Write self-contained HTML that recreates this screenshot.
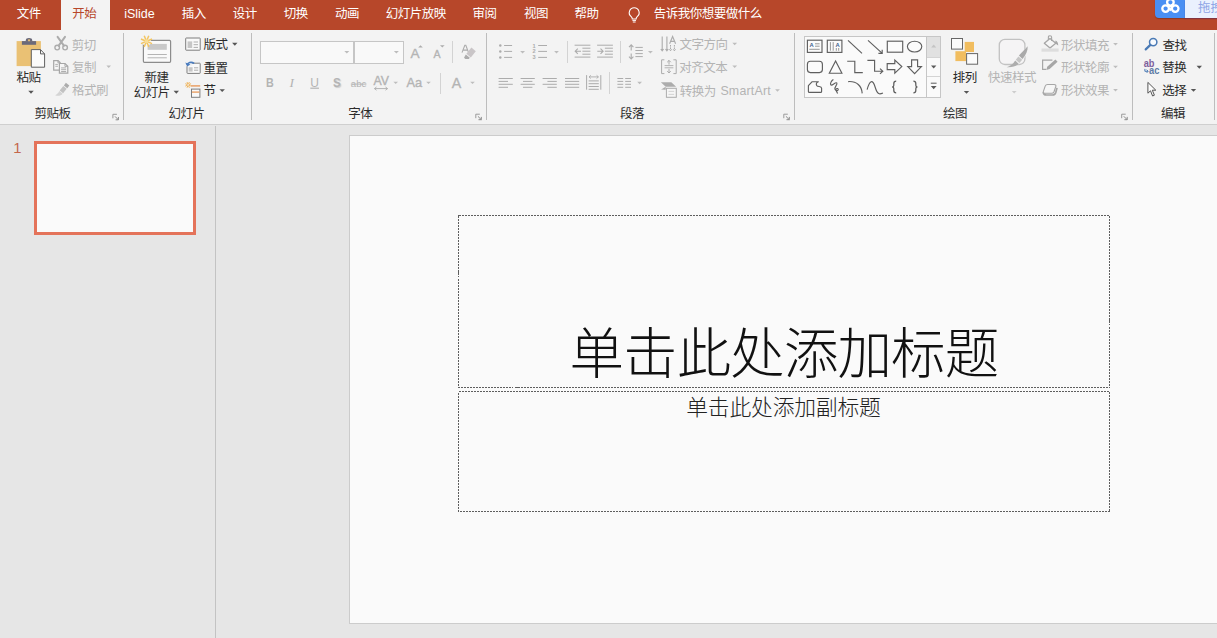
<!DOCTYPE html>
<html lang="zh-CN">
<head>
<meta charset="utf-8">
<title>PowerPoint</title>
<style>
html,body{margin:0;padding:0}
body{width:1217px;height:638px;overflow:hidden;position:relative;background:#e6e6e6;font-family:"Liberation Sans",sans-serif;font-size:12px;color:#2b2b2b}
div,span,svg{position:absolute;box-sizing:border-box}
.lbl{left:0;top:0}
.sr{width:1px;height:1px;overflow:hidden;clip-path:inset(50%);white-space:nowrap;color:transparent;font-size:1px}
svg{overflow:visible}
.tx text{font-family:"Liberation Sans","Noto Sans CJK SC",sans-serif;font-size:12.5px;letter-spacing:-0.5px;white-space:pre}
#tabbar{left:0;top:0;width:1217px;height:30px;background:#b7472a}
#tab-active{left:61px;top:0;width:49px;height:31px;background:#f3f3f3}
#ribbon{left:0;top:30px;width:1217px;height:94px;background:#f3f3f3}
#ribbon-edge{left:0;top:124px;width:1217px;height:1px;background:#cfcfcf}
.gsep{width:1px;background:#bdbdbd;top:33px;height:87px}
.ssep{width:1px;background:#d3d3d3}
.lat{white-space:nowrap;line-height:1;left:0;top:0}
.dis{color:#b3b3b3}
#work{left:0;top:125px;width:1217px;height:513px;background:#e6e6e6}
#panesep{left:215px;top:126px;width:1px;height:512px;background:#c3c3c3}
#thumb{left:34px;top:141px;width:162px;height:94px;border:3px solid #e4735a;background:#fafafa}
#slide{left:349px;top:135px;width:880px;height:489px;background:#fafafa;border:1px solid #cccccc}
#combo-font{left:260px;top:41px;width:94px;height:23px;border:1px solid #c6c6c6;background:#f9f9f9}
#combo-size{left:354px;top:41px;width:50px;height:23px;border:1px solid #c6c6c6;background:#f9f9f9}
#gallery{left:804px;top:36px;width:137px;height:62px;border:1px solid #c6c6c6;background:#fafafa}
#gal-scroll{left:926px;top:36px;width:15px;height:62px;border:1px solid #c6c6c6;background:#fafafa}
#gal-up{left:927px;top:37px;width:13px;height:21px;background:#e1e1e1}
#gal-l1{left:927px;top:57px;width:13px;height:1px;background:#d4d4d4}
#gal-l2{left:927px;top:76px;width:13px;height:1px;background:#d4d4d4}
#baidu{left:1155px;top:0;width:30px;height:18px;background:#4a8ff3;border-bottom-left-radius:4px;box-shadow:0 1px 1px rgba(70,30,20,.35)}
#baidu-bar{left:1185px;top:0;width:32px;height:18px;background:#eaf1fe;box-shadow:0 1px 1px rgba(70,30,90,.45)}
</style>
</head>
<body>
<div id="tabbar"></div><div id="tab-active"></div><div id="tabs">
<span class="lbl"><svg class="tx" style="left:16px;top:6px" width="26" height="15" fill="#ffffff" role="img" aria-label="文件"><text x="0.66" y="12.46">文件</text></svg><span class="sr">文件</span></span>
<span class="lbl"><svg class="tx" style="left:71px;top:6px" width="27" height="15" fill="#b7472a" role="img" aria-label="开始"><text x="1.29" y="12.38">开始</text></svg><span class="sr">开始</span></span>
<svg class="lat" style="left:124px;top:5px" width="63" height="19"><text x="0" y="0" font-size="12.5" fill="#ffffff" style="" transform="translate(0.2 12.9) scale(1 1)">iSlide</text></svg>
<span class="lbl"><svg class="tx" style="left:181px;top:6px" width="26" height="15" fill="#ffffff" role="img" aria-label="插入"><text x="0.64" y="12.39">插入</text></svg><span class="sr">插入</span></span>
<span class="lbl"><svg class="tx" style="left:232px;top:6px" width="26" height="15" fill="#ffffff" role="img" aria-label="设计"><text x="0.73" y="12.37">设计</text></svg><span class="sr">设计</span></span>
<span class="lbl"><svg class="tx" style="left:283px;top:6px" width="27" height="15" fill="#ffffff" role="img" aria-label="切换"><text x="0.85" y="12.39">切换</text></svg><span class="sr">切换</span></span>
<span class="lbl"><svg class="tx" style="left:334px;top:6px" width="26" height="15" fill="#ffffff" role="img" aria-label="动画"><text x="1.01" y="12.3">动画</text></svg><span class="sr">动画</span></span>
<span class="lbl"><svg class="tx" style="left:385px;top:6px" width="62" height="15" fill="#ffffff" role="img" aria-label="幻灯片放映"><text x="0.81" y="12.39">幻灯片放映</text></svg><span class="sr">幻灯片放映</span></span>
<span class="lbl"><svg class="tx" style="left:472px;top:6px" width="25" height="15" fill="#ffffff" role="img" aria-label="审阅"><text x="0.47" y="12.46">审阅</text></svg><span class="sr">审阅</span></span>
<span class="lbl"><svg class="tx" style="left:523px;top:6px" width="26" height="15" fill="#ffffff" role="img" aria-label="视图"><text x="0.93" y="12.38">视图</text></svg><span class="sr">视图</span></span>
<span class="lbl"><svg class="tx" style="left:574px;top:6px" width="26" height="15" fill="#ffffff" role="img" aria-label="帮助"><text x="0.58" y="12.39">帮助</text></svg><span class="sr">帮助</span></span>
<svg class="ic" style="left:628px;top:7px" width="13" height="16" fill="none"><g transform="translate(0.2 0)"><path d="M6 .8a4.9 4.9 0 0 0-3 8.8c.8.7 1.1 1.5 1.1 2.4h3.8c0-.9.3-1.7 1.1-2.4A4.9 4.9 0 0 0 6 .8z" stroke="#fff" stroke-width="1.1"/><path d="M4.2 13.4h3.6M4.6 15h2.8" stroke="#fff" stroke-width="1"/></g></svg>
<span class="lbl"><svg class="tx" style="left:653px;top:6px" width="110" height="15" fill="#ffffff" role="img" aria-label="告诉我你想要做什么"><text x="0.71" y="12.36">告诉我你想要做什么</text></svg><span class="sr">告诉我你想要做什么</span></span>
</div>
<div id="baidu"></div><div id="baidu-bar"></div>
<svg class="ic" style="left:1160px;top:0px" width="21" height="14" fill="none"><circle cx="10.4" cy="2.3" r="3.3" stroke="#fff" stroke-width="2.3"/><circle cx="5.6" cy="8.6" r="3.3" stroke="#fff" stroke-width="2.3"/><circle cx="15.2" cy="8.6" r="3.3" stroke="#fff" stroke-width="2.3"/><path d="M8.2 6.2L12.6 6.2L9.6 10.6" stroke="#fff" stroke-width="2" /></svg>
<span class="lbl"><svg class="tx" style="left:1197px;top:0px" width="27" height="14" fill="#8ea5e6" role="img" aria-label="拖拽"><text x="0.89" y="11.76" style="letter-spacing:0">拖拽</text></svg><span class="sr">拖拽</span></span>
<div id="ribbon"></div><div id="ribbon-edge"></div>
<div class="gsep" style="left:123px"></div>
<div class="gsep" style="left:251px"></div>
<div class="gsep" style="left:486px"></div>
<div class="gsep" style="left:794px"></div>
<div class="gsep" style="left:1132px"></div>
<div class="gsep" style="left:1214px"></div>
<div id="grp-clipboard">
<svg class="ic" style="left:16px;top:37px" width="30" height="31" fill="none"><rect x=".6" y="4.1" width="24.3" height="25" fill="#eac174"/><path d="M5.9 4.1h14.2v3.7H5.9z" fill="#6b6a7a"/><path d="M9.8 4.6V3.2a3.2 2.2 0 0 1 6.4 0v1.4z" fill="#6b6a7a"/><circle cx="13" cy="3.3" r="1.1" fill="#eac174"/><path d="M15.3 12.6h9.2l4.1 4.3v13.3H15.3z" fill="#fbfbfb" stroke="#5f5f5f" stroke-width="1"/><path d="M24.5 12.6v4.3h4.1" stroke="#5f5f5f" stroke-width="1"/></svg>
<span class="lbl"><svg class="tx" style="left:15px;top:70px" width="27" height="15" fill="#2b2b2b" role="img" aria-label="粘贴"><text x="1.57" y="12.44">粘贴</text></svg><span class="sr">粘贴</span></span>
<svg class="ic" style="left:28px;top:90px" width="7" height="4"><path transform="translate(0.3 0.75)" d="M0 0H5.4L2.7 2.9Z" fill="#555"/></svg>
<svg class="ic" style="left:53px;top:36px" width="16" height="15" fill="none"><path d="M4.6 .9L10.9 9.6M12 .9L5.7 9.6" stroke="#acacac" stroke-width="2" stroke-linecap="round"/><circle cx="4.2" cy="11.6" r="2.3" stroke="#acacac" stroke-width="1.4"/><circle cx="12.1" cy="11.6" r="2.3" stroke="#acacac" stroke-width="1.4"/></svg>
<span class="lbl"><svg class="tx" style="left:71px;top:38px" width="26" height="14" fill="#b4b4b4" role="img" aria-label="剪切"><text x="0.71" y="11.71">剪切</text></svg><span class="sr">剪切</span></span>
<svg class="ic" style="left:52px;top:59px" width="18" height="16" fill="none"><g transform="translate(0.5 0.5)"><path d="M1.2 1.1h4.4l2 2v7.6H1.2z" stroke="#a6a6a6" stroke-width="1.2" fill="#f6f6f6"/><path d="M5.4 1.1v2.2h2.2" stroke="#a6a6a6" stroke-width=".9"/><path d="M6.9 4h5.6l2.8 2.8v6.8H6.9z" stroke="#a6a6a6" stroke-width="1.2" fill="#f6f6f6"/><path d="M12.4 4v2.9h2.9" stroke="#a6a6a6" stroke-width=".9"/><path d="M8.6 8.4h5M8.6 10.2h5M8.6 12h5M2.8 4.9h2.6M2.8 6.8h2.6" stroke="#a6a6a6" stroke-width=".9"/></g></svg>
<span class="lbl"><svg class="tx" style="left:71px;top:60px" width="26" height="15" fill="#b4b4b4" role="img" aria-label="复制"><text x="0.89" y="12.1">复制</text></svg><span class="sr">复制</span></span>
<svg class="ic" style="left:106px;top:65px" width="6" height="4"><path transform="translate(0.4 0.6)" d="M0 0H4.6L2.3 2.4Z" fill="#bdbdbd"/></svg>
<svg class="ic" style="left:54px;top:82px" width="17" height="15" fill="none"><g transform="translate(0.5 0.2)"><path d="M11.4 .6l3.4 2.8-2 2.6-3.4-2.8z" fill="#acacac"/><path d="M8.8 3.8l3.4 2.8-3.6 4.4-3.4-2.8z" fill="#c2c2c2"/><path d="M4.8 8.8l3.4 2.8c-2 2.2-4.8 2.6-7.6 1.4c2-.8 3.2-2.2 4.2-4.2z" fill="#d4d4d4"/></g></svg>
<span class="lbl"><svg class="tx" style="left:71px;top:83px" width="38" height="14" fill="#b4b4b4" role="img" aria-label="格式刷"><text x="1.05" y="11.75">格式刷</text></svg><span class="sr">格式刷</span></span>
<span class="lbl"><svg class="tx" style="left:34px;top:106px" width="38" height="15" fill="#2b2b2b" role="img" aria-label="剪贴板"><text x="0.58" y="12.31">剪贴板</text></svg><span class="sr">剪贴板</span></span>
<svg class="ic" style="left:112px;top:113px" width="8" height="8" fill="none"><g transform="translate(0.4 0.8)"><path d="M.5 4.5V.5H4.5" stroke="#9a9a9a" stroke-width="1"/><path d="M2.6 2.6L6 6M6 3.2V6H3.2" stroke="#8a8a8a" stroke-width="1"/></g></svg>
</div>
<div id="grp-slides">
<svg class="ic" style="left:140px;top:35px" width="32" height="29" fill="none"><rect x="3.4" y="5.4" width="27.2" height="21.9" rx="1" fill="#f9f9f9" stroke="#8c8c8c" stroke-width="1.2"/><rect x="7.6" y="8.9" width="19.2" height="5.9" fill="#c9c9c9"/><path d="M7.6 19.5h19.2M7.6 22.8h19.2" stroke="#b4b4b4" stroke-width="1"/><circle cx="6.5" cy="6.3" r="4.6" fill="#f3f3f3"/><path d="M7.98 6.91L12.04 8.6M7.11 7.78L8.8 11.84M5.89 7.78L4.2 11.84M5.02 6.91L0.96 8.6M5.02 5.69L0.96 4M5.89 4.82L4.2 0.76M7.11 4.82L8.8 0.76M7.98 5.69L12.04 4" stroke="#f3c561" stroke-width="1.5"/><circle cx="6.5" cy="6.3" r="2" fill="#f8dc96"/></svg>
<span class="lbl"><svg class="tx" style="left:144px;top:70px" width="26" height="15" fill="#2b2b2b" role="img" aria-label="新建"><text x="0.59" y="12.08">新建</text></svg><span class="sr">新建</span></span>
<span class="lbl"><svg class="tx" style="left:133px;top:85px" width="37" height="15" fill="#2b2b2b" role="img" aria-label="幻灯片"><text x="0.67" y="12.12">幻灯片</text></svg><span class="sr">幻灯片</span></span>
<svg class="ic" style="left:173px;top:90px" width="7" height="4"><path transform="translate(0.6 0.75)" d="M0 0H5.4L2.7 2.9Z" fill="#555"/></svg>
<svg class="ic" style="left:185px;top:37px" width="16" height="14" fill="none"><rect x=".7" y="1" width="14.5" height="12.2" rx=".5" fill="#f9f9f9" stroke="#7d7d7d" stroke-width="1"/><rect x="2.6" y="4.4" width="4.6" height="6.6" fill="#c6c6c6"/><path d="M8.6 5h4.4M8.6 7.7h4.4M8.6 10.4h4.4" stroke="#a4a4a4" stroke-width=".9"/></svg>
<span class="lbl"><svg class="tx" style="left:202px;top:37px" width="27" height="15" fill="#2b2b2b" role="img" aria-label="版式"><text x="1.56" y="12.12">版式</text></svg><span class="sr">版式</span></span>
<svg class="ic" style="left:232px;top:42px" width="7" height="4"><path transform="translate(0.1 0.75)" d="M0 0H5.4L2.7 2.9Z" fill="#555"/></svg>
<svg class="ic" style="left:185px;top:60px" width="16" height="14" fill="none"><rect x="2" y="3.2" width="13.2" height="10.2" rx=".5" fill="#f9f9f9" stroke="#7d7d7d" stroke-width="1"/><rect x="3.6" y="7.2" width="4" height="4.4" fill="#c6c6c6"/><path d="M9 7.8h4.2M9 10.2h4.2" stroke="#a4a4a4" stroke-width=".9"/><rect x="0" y="0" width="7.2" height="6.2" fill="#f3f3f3"/><path d="M2.2 5.2C2.6 2.6 6 1.4 9.2 3.4" stroke="#4a7cbe" stroke-width="1.6"/><path d="M.3 2.6L2.2 6.6L5.4 4.4z" fill="#4a7cbe"/></svg>
<span class="lbl"><svg class="tx" style="left:203px;top:60px" width="26" height="15" fill="#2b2b2b" role="img" aria-label="重置"><text x="0.56" y="12.51">重置</text></svg><span class="sr">重置</span></span>
<svg class="ic" style="left:185px;top:81px" width="16" height="18" fill="none"><g transform="translate(0 0.5)"><path d="M3.94 3.71L6.06 4.59M3.51 4.14L4.39 6.26M2.89 4.14L2.01 6.26M2.46 3.71L0.34 4.59M2.46 3.09L0.34 2.21M2.89 2.66L2.01 0.54M3.51 2.66L4.39 0.54M3.94 3.09L6.06 2.21" stroke="#f0b45a" stroke-width="1"/><path d="M6 4.4h9.2" stroke="#e9a066" stroke-width="1.5"/><rect x="6.5" y="7.6" width="8.4" height="8.2" fill="#f9f9f9" stroke="#7d7d7d" stroke-width="1"/><path d="M7 10.6h7.4" stroke="#e9a066" stroke-width="1.4"/></g></svg>
<span class="lbl"><svg class="tx" style="left:203px;top:83px" width="14" height="15" fill="#2b2b2b" role="img" aria-label="节"><text x="0.39" y="12.46">节</text></svg><span class="sr">节</span></span>
<svg class="ic" style="left:219px;top:89px" width="7" height="4"><path transform="translate(0.5 0.15)" d="M0 0H5.4L2.7 2.9Z" fill="#555"/></svg>
<span class="lbl"><svg class="tx" style="left:168px;top:106px" width="37" height="15" fill="#2b2b2b" role="img" aria-label="幻灯片"><text x="0.57" y="12.07">幻灯片</text></svg><span class="sr">幻灯片</span></span>
</div>
<div id="grp-font">
<div id="combo-font"></div><div id="combo-size"></div>
<svg class="ic" style="left:344px;top:50px" width="6" height="4"><path transform="translate(0.3 0.9)" d="M0 0H5L2.5 2.6Z" fill="#bdbdbd"/></svg>
<svg class="ic" style="left:393px;top:50px" width="6" height="4"><path transform="translate(0.9 0.9)" d="M0 0H5L2.5 2.6Z" fill="#bdbdbd"/></svg>
<svg class="lat" style="left:266px;top:74px" width="13" height="19"><text x="0" y="0" font-size="12.2" fill="#b4b4b4" style="font-weight:bold" transform="translate(0.1 12.6) scale(0.88 1)">B</text></svg>
<svg class="lat" style="left:289px;top:73px" width="14" height="20"><text x="0" y="0" font-size="13.5" fill="#b4b4b4" style="font-style:italic;font-family:'Liberation Serif',serif" transform="translate(0.6 13.6) scale(1 1)">I</text></svg>
<svg class="lat" style="left:310px;top:74px" width="13" height="18"><text x="0" y="0" font-size="12" fill="#b4b4b4" style="text-decoration:underline" transform="translate(0.3 12.6) scale(1 1)">U</text></svg>
<svg class="lat" style="left:333px;top:74px" width="13" height="19"><text x="0" y="0" font-size="12.2" fill="#b4b4b4" style="font-weight:bold;text-shadow:1px 1px 1px #ccc" transform="translate(0.1 12.6) scale(0.95 1)">S</text></svg>
<svg class="lat" style="left:350px;top:77px" width="27" height="15"><text x="0" y="0" font-size="9.7" fill="#b4b4b4" style="text-decoration:line-through" transform="translate(0.8 10.1) scale(1 1)">abc</text></svg>
<svg class="lat" style="left:373px;top:72px" width="23" height="19"><text x="0" y="0" font-size="12.3" fill="#b4b4b4" style="stroke:#b4b4b4;stroke-width:.35px" transform="translate(0.5 12.7) scale(1 1)">AV</text></svg>
<svg class="ic" style="left:373px;top:86px" width="16" height="5" fill="none"><g transform="translate(0.5 0.6)"><path d="M1 2h13M3 .4L1 2l2 1.6M12 .4l2 1.6-2 1.6" stroke="#acacac" stroke-width=".9"/></g></svg>
<svg class="ic" style="left:393px;top:81px" width="6" height="4"><path transform="translate(0.4 0.7)" d="M0 0H4.6L2.3 2.4Z" fill="#bdbdbd"/></svg>
<svg class="lat" style="left:410px;top:44px" width="14" height="21"><text x="0" y="0" font-size="13.6" fill="#b4b4b4" style="stroke:#b4b4b4;stroke-width:.35px" transform="translate(0.5 13.8) scale(1 1)">A</text></svg>
<svg class="ic" style="left:418px;top:45px" width="5" height="3" fill="none"><g transform="translate(0.2 0.2)"><path d="M0 2.4L2.3 0L4.6 2.4z" fill="#acacac"/></g></svg>
<svg class="lat" style="left:433px;top:47px" width="12" height="16"><text x="0" y="0" font-size="10.6" fill="#b4b4b4" style="stroke:#b4b4b4;stroke-width:.35px" transform="translate(0.4 10.8) scale(1 1)">A</text></svg>
<svg class="ic" style="left:440px;top:45px" width="5" height="3" fill="none"><g transform="translate(0 0.2)"><path d="M0 0H4.6L2.3 2.4z" fill="#acacac"/></g></svg>
<div class="ssep" style="left:452px;top:41px;height:22px"></div>
<svg class="ic" style="left:461px;top:44px" width="16" height="16" fill="none"><path d="M1 8.6L3.8 1.2h1l2.8 7.4M2 6.1h4.6" stroke="#acacac" stroke-width="1.1"/><path d="M10.4 3.6l4.4 3.6-5 6.2-4.4-3.6z" fill="#c9c5c7"/><path d="M4.8 10.6l4 3.2-1 1.2H4.4l-1.4-1.2z" fill="#acacac"/></svg>
<svg class="lat" style="left:406px;top:74px" width="24" height="19"><text x="0" y="0" font-size="12.8" fill="#b4b4b4" style="stroke:#b4b4b4;stroke-width:.35px" transform="translate(0.5 13.1) scale(1 1)">Aa</text></svg>
<svg class="ic" style="left:426px;top:81px" width="6" height="4"><path transform="translate(0.2 0.7)" d="M0 0H4.6L2.3 2.4Z" fill="#bdbdbd"/></svg>
<div class="ssep" style="left:440px;top:73px;height:21px"></div>
<svg class="lat" style="left:451px;top:73px" width="15" height="21"><text x="0" y="0" font-size="14.2" fill="#b4b4b4" style="stroke:#b4b4b4;stroke-width:.35px" transform="translate(0.8 14.6) scale(1 1)">A</text></svg>
<svg class="ic" style="left:470px;top:81px" width="6" height="4"><path transform="translate(0.2 0.7)" d="M0 0H4.6L2.3 2.4Z" fill="#bdbdbd"/></svg>
<span class="lbl"><svg class="tx" style="left:348px;top:106px" width="26" height="15" fill="#2b2b2b" role="img" aria-label="字体"><text x="0.21" y="12.11">字体</text></svg><span class="sr">字体</span></span>
<svg class="ic" style="left:475px;top:113px" width="8" height="8" fill="none"><g transform="translate(0.3 0.7)"><path d="M.5 4.5V.5H4.5" stroke="#9a9a9a" stroke-width="1"/><path d="M2.6 2.6L6 6M6 3.2V6H3.2" stroke="#8a8a8a" stroke-width="1"/></g></svg>
</div>
<div id="grp-para">
<svg class="ic" style="left:498px;top:43px" width="15" height="17" fill="none"><g transform="translate(0 0.5)"><circle cx="2.3" cy="2" r="1.25" fill="#acacac"/><path d="M6.1 2h8" stroke="#acacac" stroke-width="1"/><circle cx="2.3" cy="7.9" r="1.25" fill="#acacac"/><path d="M6.1 7.9h8" stroke="#acacac" stroke-width="1"/><circle cx="2.3" cy="13.9" r="1.25" fill="#acacac"/><path d="M6.1 13.9h8" stroke="#acacac" stroke-width="1"/></g></svg>
<svg class="ic" style="left:520px;top:51px" width="6" height="4"><path transform="translate(0.2 0.05)" d="M0 0H4.8L2.4 2.5Z" fill="#bdbdbd"/></svg>
<svg class="ic" style="left:532px;top:43px" width="16" height="18" fill="none"><g transform="translate(0 0.5)"><text x=".6" y="4" font-family="Liberation Sans" font-size="5.6" font-weight="bold" fill="#acacac">1</text><path d="M6.2 2h8.8" stroke="#acacac" stroke-width="1"/><text x=".6" y="9.9" font-family="Liberation Sans" font-size="5.6" font-weight="bold" fill="#acacac">2</text><path d="M6.2 7.9h8.8" stroke="#acacac" stroke-width="1"/><text x=".6" y="15.9" font-family="Liberation Sans" font-size="5.6" font-weight="bold" fill="#acacac">3</text><path d="M6.2 13.9h8.8" stroke="#acacac" stroke-width="1"/></g></svg>
<svg class="ic" style="left:554px;top:51px" width="6" height="4"><path transform="translate(0.1 0.05)" d="M0 0H4.8L2.4 2.5Z" fill="#bdbdbd"/></svg>
<div class="ssep" style="left:567px;top:41px;height:22px"></div>
<svg class="ic" style="left:574px;top:44px" width="17" height="15" fill="none"><g transform="translate(0.4 0)"><path d="M.2 1.2H16M8 4.2H16M8 7.2H16M8 10.2H16M.2 13.1H16" stroke="#acacac" stroke-width="1"/><path d="M1 7.2H6.6M3.4 4.6L.8 7.2L3.4 9.8" stroke="#acacac" stroke-width="1.1"/></g></svg>
<svg class="ic" style="left:596px;top:44px" width="18" height="15" fill="none"><g transform="translate(0.9 0)"><path d="M.2 1.2H16M8 4.2H16M8 7.2H16M8 10.2H16M.2 13.1H16" stroke="#acacac" stroke-width="1"/><path d="M.4 7.2H6M3.6 4.6l2.6 2.6L3.6 9.8" stroke="#acacac" stroke-width="1.1"/></g></svg>
<div class="ssep" style="left:620px;top:41px;height:22px"></div>
<svg class="ic" style="left:628px;top:44px" width="16" height="16" fill="none"><path d="M3.2 .8V6.4M1 3.2L3.2 .8l2.2 2.4M3.2 9.4V15M1 12.6L3.2 15l2.2-2.4" stroke="#acacac" stroke-width="1.1"/><path d="M7.4 3.4H14.8M7.4 6.5H14.8M7.4 9.6H14.8M7.4 12.6H14.8" stroke="#acacac" stroke-width="1"/></svg>
<svg class="ic" style="left:648px;top:51px" width="6" height="4"><path transform="translate(0 0.05)" d="M0 0H4.8L2.4 2.5Z" fill="#bdbdbd"/></svg>
<svg class="ic" style="left:498px;top:77px" width="16" height="12" fill="none"><g transform="translate(0.6 0.7)"><path d="M0 0.8h14.2M0 3.7h9.4M0 6.6h14.2M0 9.6h9.4" stroke="#acacac" stroke-width="1"/></g></svg>
<svg class="ic" style="left:520px;top:77px" width="16" height="12" fill="none"><g transform="translate(0.6 0.7)"><path d="M0 0.8h14.2M2.4 3.7h9.4M0 6.6h14.2M2.4 9.6h9.4" stroke="#acacac" stroke-width="1"/></g></svg>
<svg class="ic" style="left:542px;top:77px" width="16" height="12" fill="none"><g transform="translate(0.6 0.7)"><path d="M0 0.8h14.2M4.8 3.7h9.4M0 6.6h14.2M4.8 9.6h9.4" stroke="#acacac" stroke-width="1"/></g></svg>
<svg class="ic" style="left:565px;top:77px" width="15" height="12" fill="none"><g transform="translate(0 0.7)"><path d="M0 0.8h14.2M0 3.7h14.2M0 6.6h14.2M0 9.6h14.2" stroke="#acacac" stroke-width="1"/></g></svg>
<svg class="ic" style="left:586px;top:74px" width="16" height="17" fill="none"><g transform="translate(0 0.5)"><path d="M.6 .6V15.2M14.8 .6V15.2" stroke="#acacac" stroke-width="1"/><path d="M3 2.4H12.4M4.8 .8L3 2.4l1.8 1.6M10.6 .8l1.8 1.6-1.8 1.6" stroke="#acacac" stroke-width=".9"/><path d="M2.6 6.4H12.8M2.6 9.2H12.8M2.6 12H12.8M2.6 14.8H12.8" stroke="#acacac" stroke-width="1"/></g></svg>
<div class="ssep" style="left:609px;top:72px;height:22px"></div>
<svg class="ic" style="left:617px;top:77px" width="15" height="12" fill="none"><g transform="translate(0.4 0.7)"><path d="M0 0.8h5.8M7.8 0.8h5.8M0 3.7h5.8M7.8 3.7h5.8M0 6.6h5.8M7.8 6.6h5.8M0 9.6h5.8M7.8 9.6h5.8" stroke="#acacac" stroke-width="1"/></g></svg>
<svg class="ic" style="left:637px;top:81px" width="6" height="4"><path transform="translate(0.2 0.65)" d="M0 0H4.8L2.4 2.5Z" fill="#bdbdbd"/></svg>
<svg class="ic" style="left:661px;top:36px" width="16" height="16" fill="none"><path d="M1.2 .6V14.6M5.9 .6V14.6M-.2 13l1.4 1.8L2.6 13M4.5 13l1.4 1.8L7.3 13" stroke="#acacac" stroke-width="1.1"/><path d="M8.6 7.8L11.6 .6L14.6 7.8M9.6 5.4h4" stroke="#acacac" stroke-width="1.15"/><path d="M9.5 9V14.6M13.4 9V14.6" stroke="#acacac" stroke-width="1" stroke-dasharray="1.6 .8"/><path d="M8.3 13.2l1.2 1.6 1.2-1.6M12.2 13.2l1.2 1.6 1.2-1.6" stroke="#acacac" stroke-width=".9"/></svg>
<span class="lbl"><svg class="tx" style="left:679px;top:37px" width="49" height="15" fill="#b4b4b4" role="img" aria-label="文字方向"><text x="0.61" y="12.49">文字方向</text></svg><span class="sr">文字方向</span></span>
<svg class="ic" style="left:732px;top:42px" width="6" height="4"><path transform="translate(0.3 0.75)" d="M0 0H4.8L2.4 2.5Z" fill="#bdbdbd"/></svg>
<svg class="ic" style="left:661px;top:59px" width="16" height="16" fill="none"><g transform="translate(0 0.2)"><path d="M3.4 .6H.6V14.4H3.4M12.4 .6h2.8V14.4h-2.8" stroke="#acacac" stroke-width="1"/><path d="M8 1.2V5.4M6.2 3l1.8-1.8L9.8 3M8 13.8V9.6M6.2 12l1.8 1.8L9.8 12" stroke="#acacac" stroke-width="1"/><path d="M3.6 6.4h8.8M3.6 8.6h8.8" stroke="#acacac" stroke-width=".9"/></g></svg>
<span class="lbl"><svg class="tx" style="left:678px;top:60px" width="51" height="15" fill="#b4b4b4" role="img" aria-label="对齐文本"><text x="1.21" y="12.3">对齐文本</text></svg><span class="sr">对齐文本</span></span>
<svg class="ic" style="left:732px;top:65px" width="6" height="4"><path transform="translate(0.3 0.55)" d="M0 0H4.8L2.4 2.5Z" fill="#bdbdbd"/></svg>
<svg class="ic" style="left:660px;top:82px" width="18" height="16" fill="none"><g transform="translate(0.5 0)"><path d="M.4 .3H10.8L15.6 4.8H5.2z" fill="#acacac"/><path d="M.6 7.4L5.2 4.8v3z" fill="#acacac"/><rect x="5.9" y="6.3" width="9.9" height="9" fill="#f6f6f6" stroke="#acacac" stroke-width="1"/><path d="M8 9.4h5.6M8 12.4h5.6" stroke="#cfcfcf" stroke-width=".9"/></g></svg>
<span class="lbl"><svg class="tx" style="left:679px;top:84px" width="38" height="14" fill="#b4b4b4" role="img" aria-label="转换为"><text x="0.76" y="11.68">转换为</text></svg><span class="sr">转换为</span></span>
<svg class="lat" style="left:720px;top:83px" width="83" height="19"><text x="0" y="0" font-size="12.4" fill="#b4b4b4" style="letter-spacing:0.2px" transform="translate(0.4 12.4) scale(1 1)">SmartArt</text></svg>
<svg class="ic" style="left:775px;top:89px" width="6" height="4"><path transform="translate(0.1 0.35)" d="M0 0H4.8L2.4 2.5Z" fill="#bdbdbd"/></svg>
<span class="lbl"><svg class="tx" style="left:619px;top:106px" width="27" height="15" fill="#2b2b2b" role="img" aria-label="段落"><text x="1" y="12.08">段落</text></svg><span class="sr">段落</span></span>
<svg class="ic" style="left:783px;top:113px" width="8" height="8" fill="none"><g transform="translate(0.3 0.7)"><path d="M.5 4.5V.5H4.5" stroke="#9a9a9a" stroke-width="1"/><path d="M2.6 2.6L6 6M6 3.2V6H3.2" stroke="#8a8a8a" stroke-width="1"/></g></svg>
</div>
<div id="grp-drawing">
<div id="gallery"></div><div id="gal-scroll"></div><div id="gal-up"></div><div id="gal-l1"></div><div id="gal-l2"></div>
<svg class="ic" style="left:804px;top:36px" width="137" height="62" fill="none"><rect x="3.4" y="4.2" width="14.6" height="12.2" fill="#fbfbfb" stroke="#5f5f5f" stroke-width="1.15"/><text x="5.5" y="11" font-family="Liberation Sans" font-weight="bold" font-size="5.8" fill="#3f628f">A</text><path d="M11 7.8h4.6M11 10.2h4.6M5.3 13.3h10.4" stroke="#8c8c8c" stroke-width=".9"/><rect x="23.3" y="4.2" width="14.6" height="12.2" fill="#fbfbfb" stroke="#5f5f5f" stroke-width="1.15"/><text x="31.5" y="11" font-family="Liberation Sans" font-weight="bold" font-size="5.8" fill="#3f628f">A</text><path d="M26.4 6.1v8.6M29.2 6.1v8.6M32.3 12v2.8M34.7 12v2.8" stroke="#8c8c8c" stroke-width=".9"/><path d="M44 4.4L58 17.4" stroke="#5f5f5f" stroke-width="1.15"/><path d="M64 4.4L78 17.2M78.2 13.8V17.4H74.4" stroke="#5f5f5f" stroke-width="1.15"/><rect x="83.3" y="5.2" width="15.4" height="11" fill="#fbfbfb" stroke="#5f5f5f" stroke-width="1.15"/><ellipse cx="110.6" cy="10.6" rx="7.2" ry="5.4" fill="#fbfbfb" stroke="#5f5f5f" stroke-width="1.15"/><rect x="3.4" y="25.2" width="15" height="11.4" rx="3" fill="#fbfbfb" stroke="#5f5f5f" stroke-width="1.15"/><path d="M31.6 24.9L37.9 37.2H25.3z" fill="#fbfbfb" stroke="#5f5f5f" stroke-width="1.15"/><path d="M43.2 25.2H50.8V36.6H58.8" stroke="#5f5f5f" stroke-width="1.15"/><path d="M63.4 24.4H70.6V35.2H78.6M76 32.6l2.8 2.6-2.8 2.6" stroke="#5f5f5f" stroke-width="1.15"/><path d="M83.2 27.6h7.6v-3.6l7 6.6-7 6.6v-3.6h-7.6z" fill="#fbfbfb" stroke="#5f5f5f" stroke-width="1.15"/><path d="M107.6 23.8h6v6.8h3.8l-6.8 7-6.8-7h3.8z" fill="#fbfbfb" stroke="#5f5f5f" stroke-width="1.15"/><path d="M8.2 45.7H14.4C12.6 46.4 11.6 48 12.8 49.6C14 51 17.6 50 17.6 52.2V55.4c0 .7-.4 1-1 1H5.4c-.7 0-1-.4-1-1V49.7z" fill="#fbfbfb" stroke="#5f5f5f" stroke-width="1.15" stroke-linejoin="round"/><path d="M29.4 43.6C27.6 44.6 25.8 47.4 26.8 48.8C28 50.4 31.4 45.6 32.8 47C34 48.4 30 51 31 53.4C31.8 55.4 34.6 54.8 34.2 53.2C33.8 51.8 31.6 52.6 32 54.2L33.6 57.6" stroke="#5f5f5f" stroke-width="1.15"/><path d="M44.2 45.6c8.6-.6 13.6 4.4 14 11.8" stroke="#5f5f5f" stroke-width="1.15"/><path d="M63.1 53.6c2.6-9.6 5.6-10.6 8-2.6s4.6 7.6 7.8 6" stroke="#5f5f5f" stroke-width="1.15"/><path d="M92.2 45.2c-2.2 0-2.4.8-2.4 2.4v1.6c0 1.2-.4 1.8-1.6 1.8c1.2 0 1.6.6 1.6 1.8v1.6c0 1.6.2 2.4 2.4 2.4" stroke="#5f5f5f" stroke-width="1.3"/><path d="M109.4 45.2c2.2 0 2.4.8 2.4 2.4v1.6c0 1.2.4 1.8 1.6 1.8c-1.2 0-1.6.6-1.6 1.8v1.6c0 1.6-.2 2.4-2.4 2.4" stroke="#5f5f5f" stroke-width="1.3"/></svg>
<svg class="ic" style="left:927px;top:36px" width="14" height="62" fill="none"><path d="M4.2 11.6L6.7 8.6L9.2 11.6z" fill="#c4c4c4"/><path d="M4 29.6H9.4L6.7 32.6z" fill="#5a5a5a"/><path d="M3.8 47.2H9.6" stroke="#5a5a5a" stroke-width="1"/><path d="M3.8 50H9.6L6.7 53.2z" fill="#5a5a5a"/></svg>
<svg class="ic" style="left:950px;top:37px" width="29" height="29" fill="none"><rect x="14.7" y="4.9" width="9.3" height="10.1" fill="#f1bd5f"/><rect x="5.4" y="14.2" width="10.6" height="9.9" fill="#f1bd5f"/><rect x="1.5" y="1.5" width="11" height="10.6" fill="#fbfbfb" stroke="#666" stroke-width="1"/><rect x="16.6" y="16.6" width="11" height="10.6" fill="#fbfbfb" stroke="#666" stroke-width="1"/></svg>
<span class="lbl"><svg class="tx" style="left:952px;top:70px" width="26" height="15" fill="#2b2b2b" role="img" aria-label="排列"><text x="0.69" y="12.16">排列</text></svg><span class="sr">排列</span></span>
<svg class="ic" style="left:963px;top:90px" width="7" height="4"><path transform="translate(0.8 0.95)" d="M0 0H5.4L2.7 2.9Z" fill="#555"/></svg>
<svg class="ic" style="left:998px;top:38px" width="32" height="31" fill="none"><rect x="1.3" y="1.3" width="25.6" height="25.2" rx="5.6" stroke="#c2c2c2" stroke-width="1.3" fill="#f5f4f5"/><path d="M7.6 30.2c4-1 8-4 11-8.4L30 7.2l.8 1.4c-.6 6-3.6 11.4-8.6 16.4c-4.6 4-9.6 5.6-14.6 5.2z" fill="#f3f3f3"/><path d="M8.6 29.2c3.6-.8 6.4-3 8.6-6.6l3.6 3.4c-3 2.4-7 3.6-12.2 3.2z" fill="#adadad"/><path d="M17.8 21.8l2.6-3.4 3.8 3.4-2.8 3.2z" fill="#c6c6c6"/><path d="M20.9 17.6L29.7 8.2c.2 4.4-1.8 9-5.2 12.8z" fill="#a9a9a9"/></svg>
<span class="lbl"><svg class="tx" style="left:987px;top:70px" width="51" height="15" fill="#b4b4b4" role="img" aria-label="快速样式"><text x="1.08" y="12.44">快速样式</text></svg><span class="sr">快速样式</span></span>
<svg class="ic" style="left:1011px;top:91px" width="6" height="4"><path transform="translate(0.8 0)" d="M0 0H4.8L2.4 2.4Z" fill="#cdcdcd"/></svg>
<svg class="ic" style="left:1041px;top:35px" width="18" height="17" fill="none"><path d="M9 3.4L3.3 8.2L9 13L14.8 8.2z" stroke="#a6a6a6" stroke-width="1.3" fill="#f6f6f6" stroke-linejoin="round"/><path d="M7.4 5V1.9c0-1.5 3.2-1.5 3.2 0V6" stroke="#a6a6a6" stroke-width="1.1"/><path d="M14.6 5.4c1.8.8 2.8 2.6 2.6 5.2c-.9-1.2-2-1.7-3.4-1.6z" fill="#a6a6a6"/><rect x=".5" y="13.5" width="17.1" height="3.2" fill="#dddddd"/></svg>
<span class="lbl"><svg class="tx" style="left:1060px;top:38px" width="51" height="14" fill="#b4b4b4" role="img" aria-label="形状填充"><text x="0.93" y="11.79">形状填充</text></svg><span class="sr">形状填充</span></span>
<svg class="ic" style="left:1113px;top:42px" width="6" height="4"><path transform="translate(0.1 0.95)" d="M0 0H4.8L2.4 2.5Z" fill="#bdbdbd"/></svg>
<svg class="ic" style="left:1041px;top:58px" width="18" height="14" fill="none"><g transform="translate(0 0.5)"><path d="M11.4 1.6H1.6V10.8H5.2" stroke="#a6a6a6" stroke-width="1.2"/><path d="M14.4 .9l2.2 2.4L8.6 10.6l-3.2.9.8-3.2z" fill="#a6a6a6"/></g></svg>
<span class="lbl"><svg class="tx" style="left:1060px;top:60px" width="50" height="15" fill="#b4b4b4" role="img" aria-label="形状轮廓"><text x="0.97" y="11.99">形状轮廓</text></svg><span class="sr">形状轮廓</span></span>
<svg class="ic" style="left:1113px;top:65px" width="6" height="4"><path transform="translate(0.1 0.75)" d="M0 0H4.8L2.4 2.5Z" fill="#bdbdbd"/></svg>
<svg class="ic" style="left:1042px;top:83px" width="16" height="14" fill="none"><g transform="translate(0 0.5)"><path d="M1.2 8.6c.2 1.8 1.2 2.9 3.2 2.9h6c1.6 0 2.8-.8 3.3-2.3l1.3-4.8" stroke="#a6a6a6" stroke-width="1.7"/><path d="M5.6 1h6.6c1.4 0 2 .8 1.6 2L12 8.2c-.4 1-1.2 1.6-2.4 1.6H3c-1.4 0-2-.8-1.6-2L3.2 2.6C3.6 1.6 4.4 1 5.6 1z" fill="#f6f6f6" stroke="#a6a6a6" stroke-width="1.1"/></g></svg>
<span class="lbl"><svg class="tx" style="left:1060px;top:83px" width="51" height="15" fill="#b4b4b4" role="img" aria-label="形状效果"><text x="0.9" y="12.42">形状效果</text></svg><span class="sr">形状效果</span></span>
<svg class="ic" style="left:1113px;top:88px" width="6" height="4"><path transform="translate(0.1 0.95)" d="M0 0H4.8L2.4 2.5Z" fill="#bdbdbd"/></svg>
<span class="lbl"><svg class="tx" style="left:942px;top:106px" width="26" height="15" fill="#2b2b2b" role="img" aria-label="绘图"><text x="0.93" y="12.08">绘图</text></svg><span class="sr">绘图</span></span>
<svg class="ic" style="left:1121px;top:113px" width="8" height="8" fill="none"><g transform="translate(0.2 0.7)"><path d="M.5 4.5V.5H4.5" stroke="#9a9a9a" stroke-width="1"/><path d="M2.6 2.6L6 6M6 3.2V6H3.2" stroke="#8a8a8a" stroke-width="1"/></g></svg>
</div>
<div id="grp-editing">
<svg class="ic" style="left:1144px;top:37px" width="15" height="14" fill="none"><g transform="translate(0.5 0)"><circle cx="8.7" cy="5.1" r="3.7" stroke="#4a7ab5" stroke-width="1.5" fill="#f8fbff"/><path d="M5.9 7.9L1.2 12.4" stroke="#4a7ab5" stroke-width="2.2" stroke-linecap="round"/></g></svg>
<span class="lbl"><svg class="tx" style="left:1161px;top:38px" width="27" height="14" fill="#2b2b2b" role="img" aria-label="查找"><text x="1.42" y="11.84">查找</text></svg><span class="sr">查找</span></span>
<svg class="ic" style="left:1143px;top:59px" width="18" height="16" fill="none"><g transform="translate(0.5 0.5)"><text x=".2" y="7.8" font-family="Liberation Sans" font-size="10" font-weight="bold" fill="#7d5f9c" textLength="10.8" lengthAdjust="spacingAndGlyphs">ab</text><text x="5.6" y="14.4" font-family="Liberation Sans" font-size="10" font-weight="bold" fill="#5d7ba6" textLength="10.4" lengthAdjust="spacingAndGlyphs">ac</text><path d="M1.4 9.4v2.4h3M3.2 10.2l1.4 1.6-1.4 1.6" stroke="#4a7ab5" stroke-width="1"/></g></svg>
<span class="lbl"><svg class="tx" style="left:1161px;top:60px" width="27" height="15" fill="#2b2b2b" role="img" aria-label="替换"><text x="1.37" y="11.99">替换</text></svg><span class="sr">替换</span></span>
<svg class="ic" style="left:1196px;top:65px" width="7" height="4"><path transform="translate(0.6 0.75)" d="M0 0H5.4L2.7 2.9Z" fill="#555"/></svg>
<svg class="ic" style="left:1147px;top:81px" width="10" height="17" fill="none"><g transform="translate(0 0.6)"><path d="M.9 .8V11.6L3.5 9.2L5.6 14.4L7.4 13.6L5.3 8.6H8.8z" fill="#fdfdfd" stroke="#555" stroke-width="1" stroke-linejoin="miter"/></g></svg>
<span class="lbl"><svg class="tx" style="left:1161px;top:83px" width="27" height="15" fill="#2b2b2b" role="img" aria-label="选择"><text x="1.33" y="12.41">选择</text></svg><span class="sr">选择</span></span>
<svg class="ic" style="left:1190px;top:88px" width="7" height="4"><path transform="translate(0.8 0.95)" d="M0 0H5.4L2.7 2.9Z" fill="#555"/></svg>
<span class="lbl"><svg class="tx" style="left:1160px;top:106px" width="27" height="15" fill="#2b2b2b" role="img" aria-label="编辑"><text x="0.99" y="12.09">编辑</text></svg><span class="sr">编辑</span></span>
</div>
<div id="work"></div><div id="panesep"></div>
<span class="lbl"><svg class="ic" style="left:12px;top:140px" width="10" height="15" role="img" aria-label="1"><text x="1.2" y="13" font-size="14.8" fill="#c4674c" style="font-family:'Liberation Sans',sans-serif">1</text></svg><span class="sr">1</span></span>
<div id="thumb"></div>
<div id="slide"></div>
<svg id="ph-title" class="ph" style="left:458px;top:215px" width="653" height="174"><rect x=".5" y=".5" width="651" height="172" fill="none" stroke="#5e5e5e" stroke-width="1" stroke-dasharray="2 1" shape-rendering="crispEdges"/></svg>
<svg id="ph-sub" class="ph" style="left:458px;top:391px" width="653" height="122"><rect x=".5" y=".5" width="651" height="120" fill="none" stroke="#5e5e5e" stroke-width="1" stroke-dasharray="2 1" shape-rendering="crispEdges"/></svg>
<span class="lbl"><svg class="tx" style="left:571px;top:326px" width="427" height="52" fill="#111" role="img" aria-label="单击此处添加标题"><text x="-1.5" y="46.83" style="font-size:54.5px;letter-spacing:-0.9px;font-weight:300">单击此处添加标题</text></svg><span class="sr">单击此处添加标题</span></span>
<span class="lbl"><svg class="tx" style="left:686px;top:395px" width="196" height="23" fill="#222" role="img" aria-label="单击此处添加副标题"><text x="0.28" y="19.78" style="font-size:21.8px;letter-spacing:-0.2px;font-weight:300">单击此处添加副标题</text></svg><span class="sr">单击此处添加副标题</span></span>
</body>
</html>
